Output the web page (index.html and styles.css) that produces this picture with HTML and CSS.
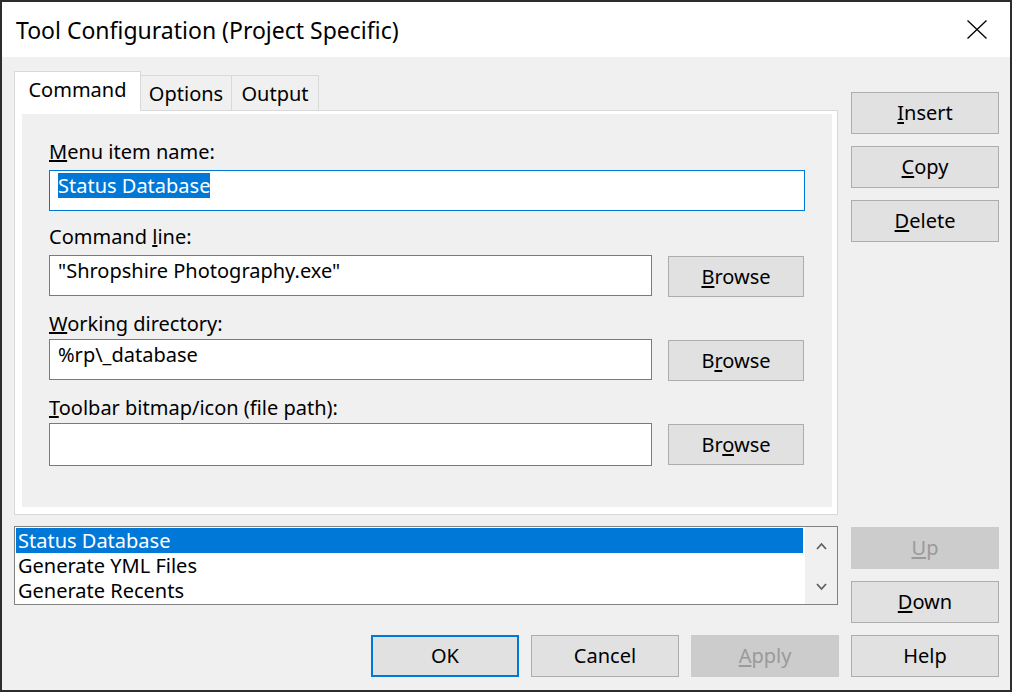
FILE: index.html
```html
<!DOCTYPE html>
<html>
<head>
<meta charset="utf-8">
<link rel="stylesheet" href="styles.css">
</head>
<body>
<div class="window">
  <div class="titlebar">
    <span class="title">Tool Configuration (Project Specific)</span>
    <svg class="close" width="20" height="19" viewBox="0 0 20 19"><path d="M0.5 0.5 L19.5 18.5 M19.5 0.5 L0.5 18.5" stroke="#000" stroke-width="1.3" fill="none"/></svg>
  </div>
  <div class="content">
    <div class="row top">
      <div class="tabs-area">
        <div class="tabstrip">
          <div class="tab active">Command</div>
          <div class="tab">Options</div>
          <div class="tab">Output</div>
        </div>
        <div class="panel">
          <div class="page">
            <div class="label first"><u>M</u>enu item name:</div>
            <div class="field focused wide"><span class="sel">Status Database</span></div>
            <div class="label second">Command <u>l</u>ine:</div>
            <div class="field-row">
              <div class="field">"Shropshire Photography.exe"</div>
              <div class="btn browse"><span><u>B</u>rowse</span></div>
            </div>
            <div class="label"><u>W</u>orking directory:</div>
            <div class="field-row">
              <div class="field">%rp\_database</div>
              <div class="btn browse"><span>B<u>r</u>owse</span></div>
            </div>
            <div class="label"><u>T</u>oolbar bitmap/icon (file path):</div>
            <div class="field-row">
              <div class="field tall"></div>
              <div class="btn browse"><span>Br<u>o</u>wse</span></div>
            </div>
          </div>
        </div>
      </div>
      <div class="side side-top">
        <div class="btn"><span><u>I</u>nsert</span></div>
        <div class="btn"><span><u>C</u>opy</span></div>
        <div class="btn"><span><u>D</u>elete</span></div>
      </div>
    </div>
    <div class="row middle">
      <div class="listbox">
        <div class="items">
          <div class="item selected">Status Database</div>
          <div class="item">Generate YML Files</div>
          <div class="item">Generate Recents</div>
        </div>
        <div class="scrollbar">
          <svg width="11" height="8" viewBox="0 0 11 8"><path d="M1 7 L5.5 2 L10 7" stroke="#606060" stroke-width="1.8" fill="none"/></svg>
          <svg width="11" height="8" viewBox="0 0 11 8"><path d="M1 1 L5.5 6 L10 1" stroke="#606060" stroke-width="1.8" fill="none"/></svg>
        </div>
      </div>
      <div class="side side-mid">
        <div class="btn disabled"><span><u>U</u>p</span></div>
        <div class="btn"><span><u>D</u>own</span></div>
      </div>
    </div>
    <div class="row bottom">
      <div class="btn default"><span>OK</span></div>
      <div class="btn"><span>Cancel</span></div>
      <div class="btn disabled"><span><u>A</u>pply</span></div>
      <div class="btn"><span>Help</span></div>
    </div>
  </div>
</div>
</body>
</html>
```
FILE: styles.css
```css
html, body {
  margin: 0;
  padding: 0;
  background: #f0f0f0;
}
body {
  font-family: "Noto Sans", "Open Sans", sans-serif;
  font-size: 20px;
  color: #000;
}
.window {
  width: 1012px;
  height: 692px;
  box-sizing: border-box;
  border: 2px solid #2d2d2d;
  display: flex;
  flex-direction: column;
  background: #f0f0f0;
}
.titlebar {
  height: 55px;
  background: #fff;
  display: flex;
  align-items: center;
  justify-content: space-between;
  padding: 0 23px 0 14px;
  flex: none;
}
.title {
  font-size: 23px;
  line-height: 30px;
}
.close {
  display: block;
}
.content {
  flex: 1;
  padding: 14px 11px 13px 12px;
  display: flex;
  flex-direction: column;
}
.row {
  display: flex;
}
.tabs-area {
  width: 824px;
  display: flex;
  flex-direction: column;
}
.tabstrip {
  display: flex;
  align-items: flex-end;
  height: 39px;
  position: relative;
  z-index: 1;
}
.tab {
  box-sizing: border-box;
  height: 35px;
  background: #f0f0f0;
  border-top: 1px solid #d9d9d9;
  border-right: 1px solid #d9d9d9;
  line-height: 24px;
  padding-top: 6px;
  text-align: center;
}
.tab:nth-child(2) { width: 91px; }
.tab:nth-child(3) { width: 87px; }
.tab.active {
  width: 127px;
  height: 40px;
  margin-bottom: -1px;
  background: #fff;
  border-left: 1px solid #d9d9d9;
}
.panel {
  box-sizing: border-box;
  height: 405px;
  border: 1px solid #d9d9d9;
  background: #fff;
  padding: 3px 5px 7px 7px;
}
.page {
  height: 100%;
  background: #f0f0f0;
  padding: 26px 0 0 27px;
  box-sizing: border-box;
}
.label {
  line-height: 24px;
  margin: 16px 0 3px;
}
.label.first {
  margin: 0 0 6px;
}
.label.second {
  margin: 14px 0 6px;
}
.field {
  box-sizing: border-box;
  width: 603px;
  height: 41px;
  background: #fff;
  border: 1px solid #7a7a7a;
  padding: 2px 8px 0;
  line-height: 25px;
  white-space: nowrap;
}
.field.wide {
  width: 756px;
}
.field.tall {
  height: 43px;
}
.field.focused {
  border-color: #0078d7;
}
.sel {
  display: inline-block;
  background: #0078d7;
  color: #fff;
  line-height: 25px;
}
.field-row {
  display: flex;
  align-items: flex-start;
  gap: 16px;
}
.btn {
  box-sizing: border-box;
  width: 148px;
  height: 42px;
  background: #e1e1e1;
  border: 1px solid #adadad;
  display: flex;
  align-items: center;
  justify-content: center;
  line-height: 24px;
  flex: none;
}
.btn u {
  text-underline-offset: 2px;
}
.btn.browse {
  width: 136px;
  height: 41px;
  margin-top: 1px;
  margin-bottom: -1px;
}
.btn.disabled {
  background: #cccccc;
  border-color: #cccccc;
  color: #9a9a9a;
}
.btn.default {
  border: 2px solid #0078d7;
}
.side {
  width: 148px;
  margin-left: 13px;
  display: flex;
  flex-direction: column;
  gap: 12px;
}
.side-top {
  padding-top: 21px;
}
.side-mid {
  padding-top: 1px;
}
.middle {
  margin-top: 11px;
  align-items: flex-start;
}
.listbox {
  box-sizing: border-box;
  width: 824px;
  height: 79px;
  border: 1px solid #828282;
  background: #fff;
  display: flex;
}
.items {
  width: 787px;
  padding: 1px;
  margin-right: 1px;
}
.item {
  line-height: 25px;
  height: 25px;
  padding-left: 2px;
  white-space: nowrap;
}
.item.selected {
  background: #0078d7;
  color: #fff;
}
.scrollbar {
  flex: 1;
  background: #f0f0f0;
  display: flex;
  flex-direction: column;
  align-items: center;
  justify-content: space-between;
  padding: 15px 0 13px;
}
.scrollbar svg {
  display: block;
}
.bottom {
  margin-top: 12px;
  justify-content: flex-end;
  gap: 12px;
}
```
